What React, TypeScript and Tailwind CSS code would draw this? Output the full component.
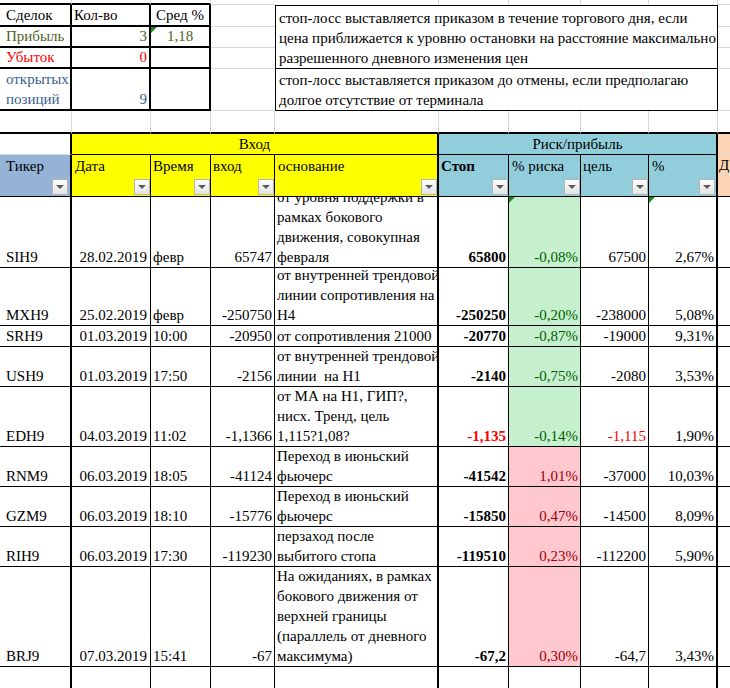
import React from "react";

type Row = {
  t: string;
  d: string;
  tm: string;
  v: string;
  e: string[];
  s: string;
  p: string;
  good: boolean;
  c: string;
  pc: string;
  red?: boolean;
  tri?: boolean;
};

const rows: Row[] = [
  { t: "SIH9", d: "28.02.2019", tm: "февр", v: "65747", e: ["от уровня поддержки в", "рамках бокового", "движения, совокупная", "февраля"], s: "65800", p: "-0,08%", good: true, c: "67500", pc: "2,67%", tri: true },
  { t: "MXH9", d: "25.02.2019", tm: "февр", v: "-250750", e: ["от внутренней трендовой", "линии сопротивления на", "H4"], s: "-250250", p: "-0,20%", good: true, c: "-238000", pc: "5,08%" },
  { t: "SRH9", d: "01.03.2019", tm: "10:00", v: "-20950", e: ["от сопротивления 21000"], s: "-20770", p: "-0,87%", good: true, c: "-19000", pc: "9,31%" },
  { t: "USH9", d: "01.03.2019", tm: "17:50", v: "-2156", e: ["от внутренней трендовой", "линии  на H1"], s: "-2140", p: "-0,75%", good: true, c: "-2080", pc: "3,53%" },
  { t: "EDH9", d: "04.03.2019", tm: "11:02", v: "-1,1366", e: ["от МА на H1, ГИП?,", "нисх. Тренд, цель", "1,115?1,08?"], s: "-1,135", p: "-0,14%", good: true, c: "-1,115", pc: "1,90%", red: true },
  { t: "RNM9", d: "06.03.2019", tm: "18:05", v: "-41124", e: ["Переход в июньский", "фьючерс"], s: "-41542", p: "1,01%", good: false, c: "-37000", pc: "10,03%" },
  { t: "GZM9", d: "06.03.2019", tm: "18:10", v: "-15776", e: ["Переход в июньский", "фьючерс"], s: "-15850", p: "0,47%", good: false, c: "-14500", pc: "8,09%" },
  { t: "RIH9", d: "06.03.2019", tm: "17:30", v: "-119230", e: ["перзаход после", "выбитого стопа"], s: "-119510", p: "0,23%", good: false, c: "-112200", pc: "5,90%" },
  { t: "BRJ9", d: "07.03.2019", tm: "15:41", v: "-67", e: ["На ожиданиях, в рамках", "бокового движения от", "верхней границы", "(параллель от дневного", "максимума)"], s: "-67,2", p: "0,30%", good: false, c: "-64,7", pc: "3,43%" },
];

const base = "relative overflow-hidden flex flex-col justify-end leading-[20px] whitespace-pre";

function Tri() {
  return (
    <div className="absolute top-0 left-0 w-0 h-0 border-t-[6px] border-t-[#1a8a1a] border-r-[6px] border-r-transparent" />
  );
}

function Drop() {
  return (
    <div className="w-[16px] h-[16px] mb-[1px] border border-[#b4b4b4] bg-linear-to-b from-[#fdfdfd] to-[#e4e4e4] flex items-center justify-center">
      <svg width="8" height="4" viewBox="0 0 8 4">
        <path d="M0 0 L8 0 L4 4 Z" fill="#5a5a5a" />
      </svg>
    </div>
  );
}

const filt = "relative overflow-hidden flex flex-row justify-end items-end";

export default function App() {
  return (
    <div className="w-[730px] h-[688px] overflow-hidden bg-white text-black font-['Liberation_Serif',serif] text-[15px]">
      <div className="grid grid-cols-[72px_79px_60px_64px_164px_70px_72px_68px_69px_12px] grid-rows-[5px_22px_21px_21px_42px_23px_21px_21px_21px_71px_58px_21px_40px_60px_40px_40px_40px_100px_21px]">
        {/* Row 0 */}
        <div className="border-r border-r-[#d9d9d9] border-b-2 border-b-black" />
        <div className="border-r border-r-[#d9d9d9] border-b-2 border-b-black" />
        <div className="border-r border-r-[#d9d9d9] border-b-2 border-b-black" />
        <div className="border-b border-[#d9d9d9]" />
        <div className="border-r border-[#d9d9d9]" />
        <div className="border-r border-[#d9d9d9]" />
        <div className="border-r border-[#d9d9d9]" />
        <div className="border-r border-[#d9d9d9]" />
        <div className="border-r border-[#d9d9d9]" />
        <div className="border-b border-[#d9d9d9]" />

        {/* Row 1 */}
        <div className={`${base} border-r-2 border-b-2 border-black pl-[6px]`}>Сделок</div>
        <div className={`${base} border-r-2 border-b-2 border-black pl-[2px]`}>Кол-во</div>
        <div className={`${base} border-r-2 border-b-2 border-black items-center`}>Сред %</div>
        <div className="border-b border-[#d9d9d9]" />
        <div className={`${base} col-span-5 row-span-3 border border-black pl-[3px]`}>
          <div>стоп-лосс выставляется приказом в течение торгового дня, если</div>
          <div>цена приближается к уровню остановки на расстояние максимально</div>
          <div>разрешенного дневного изменения цен</div>
        </div>
        <div className="border-b border-[#d9d9d9]" />

        {/* Row 2 */}
        <div className={`${base} border-r-2 border-b-2 border-black pl-[6px] text-[#4f6228]`}>Прибыль</div>
        <div className={`${base} border-r-2 border-b-2 border-black pr-[2px] text-right text-[#4f6228]`}>3</div>
        <div className={`${base} border-r-2 border-b-2 border-black items-center text-[#4f6228]`}>
          <Tri />
          1,18
        </div>
        <div className="border-b border-[#d9d9d9]" />
        <div className="border-b border-[#d9d9d9]" />

        {/* Row 3 */}
        <div className={`${base} border-r-2 border-b-2 border-black pl-[6px] text-[#ff0000]`}>Убыток</div>
        <div className={`${base} border-r-2 border-b-2 border-black pr-[2px] text-right text-[#ff0000]`}>0</div>
        <div className={`${base} border-r-2 border-b-2 border-black`} />
        <div className="border-b border-[#d9d9d9]" />
        <div className="border-b border-[#d9d9d9]" />

        {/* Row 4 */}
        <div className={`${base} border-r-2 border-b-2 border-black pl-[6px] text-[#366092]`}>
          <div>открытых</div>
          <div>позиций</div>
        </div>
        <div className={`${base} border-r-2 border-b-2 border-black pr-[2px] text-right text-[#366092]`}>9</div>
        <div className={`${base} border-r-2 border-b-2 border-black`} />
        <div className="border-b border-[#d9d9d9]" />
        <div className={`${base} col-span-5 border-x border-b border-black pl-[3px]`}>
          <div>стоп-лосс выставляется приказом до отмены, если предполагаю</div>
          <div>долгое отсутствие от терминала</div>
        </div>
        <div className="border-b border-[#d9d9d9]" />

        {/* Row 5 */}
        <div className="border-r border-r-[#d9d9d9] border-b-2 border-b-black" />
        <div className="border-r border-r-[#d9d9d9] border-b-2 border-b-black" />
        <div className="border-r border-r-[#d9d9d9] border-b-2 border-b-black" />
        <div className="border-r border-r-[#d9d9d9] border-b-2 border-b-black" />
        <div className="border-r border-r-[#d9d9d9] border-b-2 border-b-black" />
        <div className="border-r border-r-[#d9d9d9] border-b-2 border-b-black" />
        <div className="border-r border-r-[#d9d9d9] border-b-2 border-b-black" />
        <div className="border-r border-r-[#d9d9d9] border-b-2 border-b-black" />
        <div className="border-r border-r-[#d9d9d9] border-b-2 border-b-black" />
        <div className="border-b-2 border-b-black" />

        {/* Row 6 header */}
        <div className="border-r-2 border-r-black border-b border-b-[#d9d9d9]" />
        <div className={`${base} col-span-4 bg-[#ffff00] border-r-2 border-b border-black items-center`}>Вход</div>
        <div className={`${base} col-span-4 bg-[#92cddc] border-r-2 border-b border-black items-center`}>Риск/прибыль</div>
        <div className="bg-[#fcd5b4] border-b border-[#d9d9d9]" />

        {/* Row 7 labels */}
        <div className={`${base} bg-[#95b3d7] border-r-2 border-black pl-[6px]`}>Тикер</div>
        <div className={`${base} bg-[#ffff00] border-r border-black pl-[3px]`}>Дата</div>
        <div className={`${base} bg-[#ffff00] border-r border-black pl-[2px]`}>Время</div>
        <div className={`${base} bg-[#ffff00] border-r border-black pl-[2px]`}>вход</div>
        <div className={`${base} bg-[#ffff00] border-r-2 border-black pl-[3px]`}>основание</div>
        <div className={`${base} bg-[#92cddc] border-r border-black pl-[2px] font-bold`}>Стоп</div>
        <div className={`${base} bg-[#92cddc] border-r border-black pl-[3px]`}>% риска</div>
        <div className={`${base} bg-[#92cddc] border-r border-black pl-[2px]`}>цель</div>
        <div className={`${base} bg-[#92cddc] border-r-2 border-black pl-[3px]`}>%</div>
        <div className={`${base} bg-[#fcd5b4] border-b border-[#d9d9d9] pl-[1px]`}>Д</div>

        {/* Row 8 filters */}
        <div className={`${filt} bg-[#95b3d7] border-r-2 border-b border-black pr-[2px]`}><Drop /></div>
        <div className={`${filt} bg-[#ffff00] border-r border-b border-black`}><Drop /></div>
        <div className={`${filt} bg-[#ffff00] border-r border-b border-black`}><Drop /></div>
        <div className={`${filt} bg-[#ffff00] border-r border-b border-black`}><Drop /></div>
        <div className={`${filt} bg-[#ffff00] border-r-2 border-b border-black`}><Drop /></div>
        <div className={`${filt} bg-[#92cddc] border-r border-b border-black`}><Drop /></div>
        <div className={`${filt} bg-[#92cddc] border-r border-b border-black`}><Drop /></div>
        <div className={`${filt} bg-[#92cddc] border-r border-b border-black`}><Drop /></div>
        <div className={`${filt} bg-[#92cddc] border-r-2 border-b border-black pr-[1px]`}><Drop /></div>
        <div className="bg-[#fcd5b4] border-b border-black" />

        {/* Data rows */}
        {rows.map((r) => (
          <React.Fragment key={r.t}>
            <div className={`${base} border-r-2 border-b border-black pl-[6px]`}>{r.t}</div>
            <div className={`${base} border-r border-b border-black pr-[3px] text-right`}>{r.d}</div>
            <div className={`${base} border-r border-b border-black pl-[2px]`}>{r.tm}</div>
            <div className={`${base} border-r border-b border-black pr-[2px] text-right`}>{r.v}</div>
            <div className={`${base} border-r-2 border-b border-black pl-[2px]`}>
              {r.e.map((l, i) => (
                <div key={i}>{l}</div>
              ))}
            </div>
            <div className={`${base} border-r border-b border-black pr-[2px] text-right font-bold ${r.red ? "text-[#ff0000]" : ""}`}>{r.s}</div>
            <div
              className={`${base} border-r border-b border-black pr-[2px] text-right ${
                r.good ? "bg-[#c6efce] text-[#006100]" : "bg-[#ffc7ce] text-[#9c0006]"
              }`}
            >
              {r.tri ? <Tri /> : null}
              {r.p}
            </div>
            <div className={`${base} border-r border-b border-black pr-[2px] text-right ${r.red ? "text-[#ff0000]" : ""}`}>{r.c}</div>
            <div className={`${base} border-r-2 border-b border-black pr-[2px] text-right`}>
              {r.tri ? <Tri /> : null}
              {r.pc}
            </div>
            <div className="border-b border-black" />
          </React.Fragment>
        ))}

        {/* Last empty row */}
        <div className="border-r-2 border-black" />
        <div className="border-r border-black" />
        <div className="border-r border-black" />
        <div className="border-r border-black" />
        <div className="border-r-2 border-black" />
        <div className="border-r border-black" />
        <div className="border-r border-black" />
        <div className="border-r border-black" />
        <div className="border-r-2 border-black" />
        <div />
      </div>
    </div>
  );
}
